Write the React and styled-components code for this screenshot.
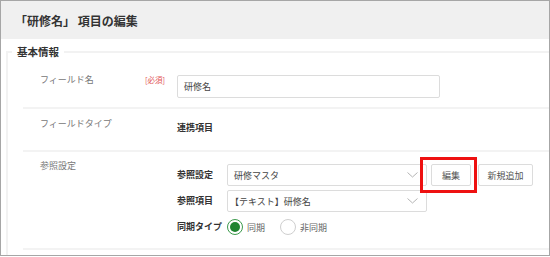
import React from 'react';
import styled, { createGlobalStyle } from 'styled-components';

const GlobalStyle = createGlobalStyle`
  body {
    margin: 0;
    background: #fff;
    font-family: "Noto Sans CJK JP", "Noto Sans", sans-serif;
  }
`;

const Frame = styled.div`
  width: 550px;
  height: 256px;
  box-sizing: border-box;
  border: 1px solid #a6a6a6;
  overflow: hidden;
  background: #fff;
`;

const Header = styled.div`
  height: 38px;
  display: flex;
  align-items: center;
  padding-left: 14px;
  background: #f0f0f0;
  color: #333;
  font-size: 12px;
  font-weight: 700;
`;

const Fieldset = styled.fieldset`
  margin: 6px -10px 0 5px;
  padding: 0 0 20px;
  border: 2px solid #f2f2f2;
  min-width: 0;
`;

const Legend = styled.legend`
  margin-left: 4px;
  padding: 0 5px;
  color: #333;
  font-size: 10.5px;
  font-weight: 700;
  line-height: 14px;
`;

const Row = styled.div`
  margin-left: 15px;
  padding: ${props => props.$pad};
  border-bottom: 2px solid #f3f3f3;
  display: grid;
  grid-template-columns: 105px 32px 1fr;
  align-items: start;
`;

const Label = styled.div`
  color: #777;
  font-size: 9px;
  line-height: 14px;
`;

const Required = styled.div`
  color: #e25555;
  font-size: 7.5px;
  line-height: 14px;
`;

const Value = styled.div`
  margin-top: ${props => props.$top || 0}px;
  color: #333;
  font-size: 9px;
  font-weight: 700;
  line-height: 14px;
`;

const Input = styled.div`
  margin-top: 2px;
  width: 263px;
  height: 23px;
  box-sizing: border-box;
  border: 1px solid #dcdcdc;
  border-radius: 2px;
  padding-left: 6px;
  display: flex;
  align-items: center;
  color: #444;
  font-size: 9px;
`;

const SubGrid = styled.div`
  grid-column: 3;
  margin-top: 5px;
  display: grid;
  grid-template-columns: 50px auto;
  grid-auto-rows: 22px;
  row-gap: 4px;
  align-items: center;
`;

const Controls = styled.div`
  display: flex;
  align-items: center;
`;

const Select = styled.div`
  width: 200px;
  height: 22px;
  box-sizing: border-box;
  border: 1px solid #dcdcdc;
  border-radius: 2px;
  padding: 0 8px 0 ${props => props.$indent || 6}px;
  display: flex;
  align-items: center;
  justify-content: space-between;
  color: #444;
  font-size: 9px;
`;

const Button = styled.div`
  width: ${props => props.$w}px;
  height: 22px;
  margin-left: ${props => props.$gap}px;
  box-sizing: border-box;
  border: 1px solid #dcdcdc;
  border-radius: 2px;
  background: #fff;
  display: flex;
  align-items: center;
  justify-content: center;
  color: #555;
  font-size: 9px;
`;

const Highlight = styled.div`
  position: relative;

  &::after {
    content: '';
    position: absolute;
    top: -7px;
    bottom: -7px;
    left: -7px;
    right: -6px;
    border: 3px solid #ee1111;
  }
`;

const RadioOption = styled.div`
  display: flex;
  align-items: center;
  gap: 4px;
  margin-right: 15px;
  color: #666;
  font-size: 9px;
`;

const RadioCircle = styled.span`
  width: 16px;
  height: 16px;
  box-sizing: border-box;
  border-radius: 50%;
  border: 1px solid ${props => (props.$checked ? '#3c9a4c' : '#cfcfcf')};
  display: flex;
  align-items: center;
  justify-content: center;

  &::before {
    content: '';
    width: 10px;
    height: 10px;
    border-radius: 50%;
    background: ${props => (props.$checked ? '#1f8430' : 'transparent')};
  }
`;

const Chevron = () => (
  <svg width="11" height="6" viewBox="0 0 11 6">
    <path d="M0.5 0.5 L5.5 5 L10.5 0.5" fill="none" stroke="#b5b5b5" strokeWidth="1" />
  </svg>
);

const Radio = ({ checked, children }) => (
  <RadioOption>
    <RadioCircle $checked={checked} />
    {children}
  </RadioOption>
);

const App = () => (
  <>
    <GlobalStyle />
    <Frame>
      <Header>「研修名」 項目の編集</Header>
      <Fieldset>
        <Legend>基本情報</Legend>
        <Row $pad="14px 0 9px 17px">
          <Label>フィールド名</Label>
          <Required>[必須]</Required>
          <Input>研修名</Input>
        </Row>
        <Row $pad="8px 0 15px 17px">
          <Label>フィールドタイプ</Label>
          <span />
          <Value $top={4}>連携項目</Value>
        </Row>
        <Row $pad="7px 0 10px 17px">
          <Label>参照設定</Label>
          <SubGrid>
            <Value>参照設定</Value>
            <Controls>
              <Select>
                研修マスタ
                <Chevron />
              </Select>
              <Highlight>
                <Button $w={40} $gap={4}>編集</Button>
              </Highlight>
              <Button $w={55} $gap={7}>新規追加</Button>
            </Controls>
            <Value>参照項目</Value>
            <Controls>
              <Select $indent={2}>
                【テキスト】研修名
                <Chevron />
              </Select>
            </Controls>
            <Value>同期タイプ</Value>
            <Controls>
              <Radio checked>同期</Radio>
              <Radio>非同期</Radio>
            </Controls>
          </SubGrid>
        </Row>
      </Fieldset>
    </Frame>
  </>
);

export default App;
